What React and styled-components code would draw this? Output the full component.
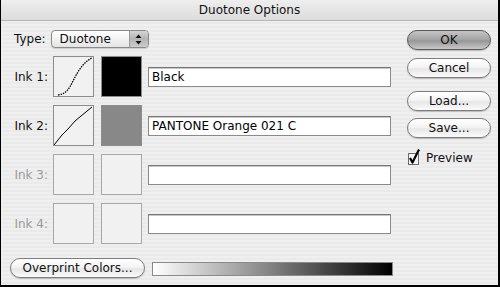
import React from "react";
import styled, { createGlobalStyle } from "styled-components";

const Global = createGlobalStyle`
  html, body { margin: 0; padding: 0; background: #000; }
  body { font-family: "DejaVu Sans", "Liberation Sans", sans-serif; }
`;

const Window = styled.div`
  width: 497px;
  height: 285px;
  border-left: 1px solid #000;
  border-right: 2px solid #000;
  border-bottom: 2px solid #000;
  background: repeating-linear-gradient(180deg, #efefef 0 2px, #eaeaea 2px 4px);
  display: flex;
  flex-direction: column;
  overflow: hidden;
`;

const TitleBar = styled.div`
  height: 20px;
  flex: none;
  background: linear-gradient(180deg, #eeeeee 0%, #dcdcdc 100%);
  border-bottom: 1px solid #b4b4b4;
  display: flex;
  align-items: center;
  justify-content: center;
  font-size: 12px;
  color: #111;
`;

const Body = styled.div`
  flex: 1;
  display: flex;
  padding: 9px 0 0 9px;
`;

const LeftCol = styled.div`
  width: 383px;
  display: flex;
  flex-direction: column;
  gap: 8px;
`;

const RightCol = styled.div`
  margin-left: 14px;
  width: 84px;
  display: flex;
  flex-direction: column;
`;

const TypeRow = styled.div`
  display: flex;
  align-items: center;
  height: 18px;
  padding-left: 4px;
  gap: 5px;
`;

const Label = styled.span`
  font-size: 12px;
  color: ${(p) => (p.$disabled ? "#9a9a9a" : "#111")};
`;

const Popup = styled.div`
  width: 96px;
  height: 16px;
  border: 1px solid #8a8a8a;
  border-radius: 4px;
  background: linear-gradient(180deg, #ffffff 0%, #f2f2f2 50%, #e4e4e4 100%);
  display: flex;
  align-items: center;
  overflow: hidden;
  box-shadow: 0 1px 1px rgba(0,0,0,0.15);
`;

const PopupText = styled.span`
  flex: 1;
  font-size: 12px;
  color: #111;
  padding-left: 8px;
`;

const PopupArrows = styled.div`
  width: 18px;
  height: 100%;
  background: linear-gradient(180deg, #d4d4d4 0%, #b4b4b4 50%, #cccccc 100%);
  border-left: 1px solid #9a9a9a;
  display: flex;
  align-items: center;
  justify-content: center;
`;

const InkRow = styled.div`
  display: flex;
  align-items: center;
  height: 41px;
`;

const InkLabel = styled(Label)`
  width: 38px;
  text-align: right;
  margin-right: 5px;
`;

const Box = styled.div`
  width: 39px;
  height: 39px;
  border: 1px solid ${(p) => (p.$disabled ? "#a8a8a8" : "#8c8c8c")};
  background: ${(p) => p.$fill || "#f1f1f1"};
  margin-right: ${(p) => p.$mr}px;
  box-sizing: content-box;
  flex: none;
  svg { display: block; }
`;

const Field = styled.div`
  width: 238px;
  height: 18px;
  border: 1px solid #8a8a8a;
  border-top-color: #777;
  background: #fff;
  box-shadow: inset 0 1px 0 #c8c8c8;
  display: flex;
  align-items: center;
  padding-left: 3px;
  font-size: 12px;
  color: #000;
`;

const BottomRow = styled.div`
  margin-top: 6px;
  display: flex;
  align-items: center;
  gap: 7px;
`;

const Pill = styled.div`
  width: ${(p) => p.$w}px;
  height: ${(p) => p.$h || 18}px;
  border: 1px solid ${(p) => (p.$default ? "#5a5a5a" : "#7d7d7d")};
  border-radius: 10px;
  background: ${(p) =>
    p.$default
      ? "linear-gradient(180deg, #c4c4c4 0%, #a6a6a6 45%, #979797 55%, #c8c8c8 100%)"
      : "linear-gradient(180deg, #ffffff 0%, #f4f4f4 45%, #e6e6e6 55%, #fbfbfb 100%)"};
  display: flex;
  align-items: center;
  justify-content: center;
  font-size: 12px;
  color: #111;
  box-shadow: 0 1px 1px rgba(0,0,0,0.2);
  margin-top: ${(p) => p.$mt || 0}px;
  flex: none;
`;

const GradientBar = styled.div`
  width: 243px;
  height: 12px;
  border: 1px solid #8a8a8a;
  background: linear-gradient(90deg, #ffffff 0%, #000000 100%);
  margin-top: 1px;
`;

const CheckRow = styled.div`
  margin-top: 11px;
  display: flex;
  align-items: center;
  gap: 6px;
  padding-left: 1px;
`;

const Curve1 = () => (
  <svg width="39" height="39" viewBox="0 0 39 39">
    <path d="M4,38 C12,37 15,32 19,24 S29,5 38,1" fill="none" stroke="#000" strokeWidth="1.3" strokeDasharray="1.5 1" />
  </svg>
);

const Curve2 = () => (
  <svg width="39" height="39" viewBox="0 0 39 39">
    <path d="M0,39 L8,29 L14,23 L21,15 L27,10 L38,1" fill="none" stroke="#000" strokeWidth="1" />
  </svg>
);

const Arrows = () => (
  <svg width="7" height="11" viewBox="0 0 7 11">
    <path d="M3.5,0.5 L6.5,4 L0.5,4 Z" fill="#111" />
    <path d="M3.5,10.5 L6.5,7 L0.5,7 Z" fill="#111" />
  </svg>
);

const Check = () => (
  <svg width="12" height="17" viewBox="0 0 12 17">
    <rect x="0.5" y="4.5" width="10" height="11" fill="#f4f4f4" stroke="#6a6a6a" />
    <path d="M2,9 L4.5,13.5 L11,0.5" fill="none" stroke="#000" strokeWidth="2.2" strokeLinejoin="round" />
  </svg>
);

const inks = [
  { label: "Ink 1:", curve: <Curve1 />, fill: "#000", name: "Black" },
  { label: "Ink 2:", curve: <Curve2 />, fill: "#888", name: "PANTONE Orange 021 C" },
  { label: "Ink 3:", disabled: true, name: "" },
  { label: "Ink 4:", disabled: true, name: "" },
];

export default function App() {
  return (
    <>
      <Global />
      <Window>
        <TitleBar>Duotone Options</TitleBar>
        <Body>
          <LeftCol>
            <TypeRow>
              <Label>Type:</Label>
              <Popup>
                <PopupText>Duotone</PopupText>
                <PopupArrows><Arrows /></PopupArrows>
              </Popup>
            </TypeRow>
            {inks.map((ink) => (
              <InkRow key={ink.label}>
                <InkLabel $disabled={ink.disabled}>{ink.label}</InkLabel>
                <Box $mr={7} $disabled={ink.disabled}>{ink.curve}</Box>
                <Box $mr={6} $disabled={ink.disabled} $fill={ink.fill} />
                <Field>{ink.name}</Field>
              </InkRow>
            ))}
            <BottomRow>
              <Pill $w={133}>Overprint Colors...</Pill>
              <GradientBar />
            </BottomRow>
          </LeftCol>
          <RightCol>
            <Pill $w={82} $default>OK</Pill>
            <Pill $w={82} $mt={8}>Cancel</Pill>
            <Pill $w={82} $mt={13}>Load...</Pill>
            <Pill $w={82} $mt={7}>Save...</Pill>
            <CheckRow>
              <Check />
              <Label>Preview</Label>
            </CheckRow>
          </RightCol>
        </Body>
      </Window>
    </>
  );
}
